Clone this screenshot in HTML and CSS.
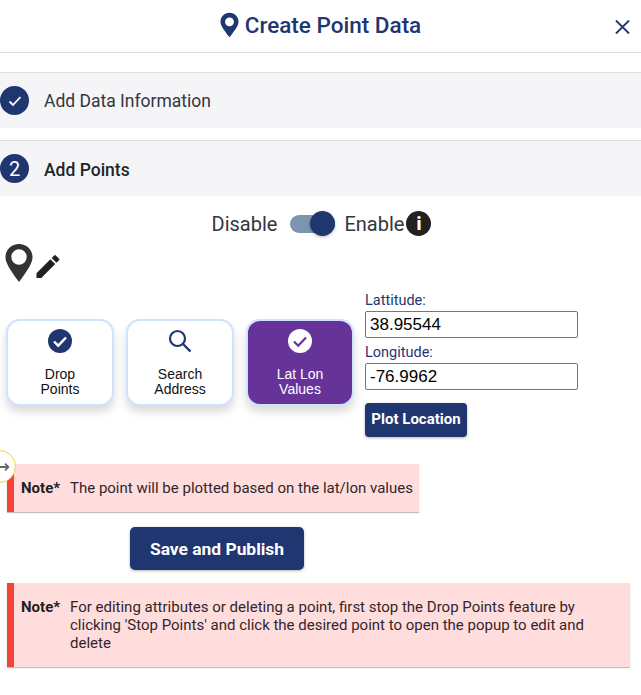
FILE: index.html
```html
<!DOCTYPE html>
<html lang="en">
<head>
<meta charset="utf-8">
<title>Create Point Data</title>
<link rel="stylesheet" href="styles.css">
</head>
<body>
<div class="panel">
  <header class="header">
    <svg class="title-pin" viewBox="0 0 20 26"><path fill-rule="evenodd" d="M10 0C4.500 0 .5 4.200.5 9.600c0 3.600 2.700 7.600 9.500 16.400 6.800-8.800 9.500-12.800 9.500-16.400C19.500 4.200 15.500 0 10 0zm0 5a4.700 4.700 0 1 1 0 9.400A4.700 4.700 0 0 1 10 5z"/></svg>
    <h1 class="title">Create Point Data</h1>
    <svg class="close" viewBox="0 0 16 14" preserveAspectRatio="none"><path d="M1 .5l14 13M15 .5L1 13.500"/></svg>
  </header>

  <section class="step step-first">
    <span class="step-num"><svg viewBox="0 0 16 16"><path d="M2.500 8.500l3.500 3.500 7.500-8"/></svg></span>
    <span class="step-label">Add Data Information</span>
  </section>
  <section class="step step-second">
    <span class="step-num">2</span>
    <span class="step-label step-active">Add Points</span>
  </section>

  <div class="toggle-row">
    <span>Disable</span>
    <span class="track"><span class="thumb"></span></span>
    <span>Enable</span>
    <span class="info">i</span>
  </div>

  <div class="tools">
    <svg class="big-pin" viewBox="0 0 28 38"><path fill-rule="evenodd" d="M14 0C6.200 0 .5 5.800.5 13.200.5 19 5 25.500 14 38c9-12.500 13.500-19 13.500-24.800C27.500 5.800 21.800 0 14 0zm0 5.300a7.700 7.700 0 1 1 0 15.400 7.700 7.700 0 0 1 0-15.400z"/></svg>
    <svg class="pencil" viewBox="0 0 24 24"><path d="M0 24v-5L14.500 4.500l5 5L5 24zM15.800 3.200L18.500.5a1.200 1.200 0 0 1 1.700 0l3.300 3.300a1.200 1.200 0 0 1 0 1.700l-2.700 2.700z"/></svg>
  </div>

  <div class="options">
    <div class="card">
      <svg class="card-icon" viewBox="0 0 24 24"><circle cx="12" cy="12" r="12" fill="#1f3670"/><path d="M6 12.500l4.200 4.200L18 8.500" fill="none" stroke="#fff" stroke-width="2.400"/></svg>
      <span>Drop<br>Points</span>
    </div>
    <div class="card">
      <svg class="card-icon" viewBox="0 0 24 24"><circle cx="9.500" cy="9.500" r="7.500" fill="none" stroke="#1f3670" stroke-width="2.200"/><path d="M15 15l7.500 7.500" stroke="#1f3670" stroke-width="2.400"/></svg>
      <span>Search<br>Address</span>
    </div>
    <div class="card card-on">
      <svg class="card-icon" viewBox="0 0 24 24"><circle cx="12" cy="12" r="12" fill="#fff"/><path d="M6 12.500l4.200 4.200L18 8.500" fill="none" stroke="#663399" stroke-width="2.200"/></svg>
      <span>Lat Lon<br>Values</span>
    </div>
    <div class="coords">
      <label class="coord-label" for="lat">Lattitude:</label>
      <input class="coord-input" id="lat" value="38.95544">
      <label class="coord-label coord-gap" for="lon">Longitude:</label>
      <input class="coord-input" id="lon" value="-76.9962">
      <button class="plot">Plot Location</button>
    </div>
  </div>

  <div class="note note-short"><b>Note*</b><span>The point will be plotted based on the lat/lon values</span></div>
  <div class="save-row"><button class="save">Save and Publish</button></div>
  <div class="note note-long"><b>Note*</b><span>For editing attributes or deleting a point, first stop the Drop Points feature by clicking 'Stop Points' and click the desired point to open the popup to edit and delete</span></div>

  <span class="tour">
    <svg viewBox="0 0 12 12"><path d="M0 6h9M6 2l4 4-4 4" fill="none" stroke="#666" stroke-width="2.200"/></svg>
  </span>
</div>
</body>
</html>
```
FILE: styles.css
```css
* { box-sizing: border-box; }
html, body { margin: 0; background: #fff; }
body { font-family: Roboto, sans-serif; color: #212529; }
.panel { position: relative; width: 641px; height: 695px; overflow: hidden; }

.header { position: relative; height: 53px; border-bottom: 1px solid #ddd; display: flex; align-items: center; justify-content: center; gap: 6px; padding-bottom: 2px; }
.title-pin { width: 19px; height: 26px; fill: #1f3670; }
.title { margin: 0; font-size: 22.5px; font-weight: 500; color: #1f3670; line-height: 26px; }
.close { position: absolute; right: 11px; top: 20px; width: 15px; height: 14px; fill: none; stroke: #1f3670; stroke-width: 2; }

.step { height: 56px; background: #f5f5f8; border-top: 1px solid #ddd; display: flex; align-items: center; gap: 15px; font-size: 17.5px; }
.step-first { margin-top: 19px; }
.step-second { margin-top: 12px; }
.step-num { width: 29px; height: 29px; border-radius: 50%; background: #1f3670; color: #fff; display: flex; align-items: center; justify-content: center; font-size: 20px; }
.step-num svg { width: 16px; height: 16px; fill: none; stroke: #fff; stroke-width: 1.800; }
.step-label { color: #33363d; }
.step-active { font-weight: 500; color: #212529; padding-top: 2px; }

.toggle-row { display: flex; align-items: center; justify-content: center; height: 25px; margin-top: 15px; padding-left: 2px; font-size: 20px; color: #33363d; }
.track { position: relative; width: 45px; height: 18px; margin: 0 9px 0 13px; border-radius: 9px; background: #7a95ad; }
.thumb { position: absolute; right: 0; top: -3.500px; width: 25px; height: 25px; border-radius: 50%; background: #1f3670; box-shadow: 0 1px 3px rgba(0,0,0,.3); }
.info { width: 25px; height: 25px; border-radius: 50%; background: #212121; color: #fff; font-weight: 900; font-size: 18px; line-height: 25px; text-align: center; margin-left: 2px; }

.tools { display: flex; align-items: flex-end; height: 38px; margin: 8px 0 0 5px; }
.big-pin { width: 28px; height: 38px; fill: #333; }
.pencil { width: 24px; height: 23px; fill: #212121; margin: 0 0 4px 3px; }

.options { display: flex; align-items: flex-start; margin: 11px 0 0 6px; }
.card { width: 108px; height: 87px; margin: 26px 12px 0 0; padding-top: 8px; border: 2px solid #cfe2ff; border-radius: 14px; background: #fff; box-shadow: 0 6px 10px rgba(0,0,0,.15); display: flex; flex-direction: column; align-items: center; font-family: "Liberation Sans", Arial, sans-serif; font-size: 14px; line-height: 15px; text-align: center; color: #111; }
.card-icon { width: 24px; height: 24px; margin-bottom: 14px; flex: none; }
.card-on { margin-right: 11px; background: #663399; color: #fff; }
.coords { display: flex; flex-direction: column; align-items: flex-start; }
.coord-label { font-size: 14.500px; line-height: 16px; color: #1f3670; height: 16px; }
.coord-gap { margin-top: 7px; }
.coord-input { display: block; width: 213px; height: 27px; margin-top: 2px; padding: 0 4px; border: 1px solid #767676; border-radius: 2px; font-family: "Liberation Sans", Arial, sans-serif; font-size: 17px; color: #000; background: #fff; }
.plot { margin-top: 13px; width: 102px; height: 34px; padding: 0 0 2px; border: 0; border-radius: 4px; background: #1f3670; color: #fff; font-family: Roboto, sans-serif; font-size: 15px; font-weight: 700; box-shadow: 0 1px 3px rgba(0,0,0,.3); }

.note { display: flex; margin-left: 7px; background: #ffdddd; border-left: 7px solid #f44336; box-shadow: 0 1px 1px rgba(0,0,0,.25); font-size: 15px; color: #33262b; }
.note b { flex: none; width: 49px; color: #212121; font-weight: 700; }
.note span { flex: 1; }
.note-short { width: 412px; height: 48px; margin-top: 27px; padding: 16px 0 0 7px; line-height: 16px; }
.save-row { margin: 15px 0 0 130px; }
.save { width: 174px; height: 43px; padding: 0; border: 0; border-radius: 5px; background: #1f3670; color: #fff; font-family: Roboto, sans-serif; font-size: 17.400px; font-weight: 700; box-shadow: 0 1px 3px rgba(0,0,0,.3); }
.note-long { width: 623px; height: 84px; margin-top: 13px; padding: 15px 20px 0 7px; line-height: 18px; }

.tour { position: absolute; left: -17px; top: 450px; width: 33px; height: 33px; border: 1.500px solid #f6cf3d; border-radius: 50%; background: #fff; display: flex; align-items: center; justify-content: flex-end; padding-right: 5px; }
.tour svg { width: 10px; height: 12px; }
```
